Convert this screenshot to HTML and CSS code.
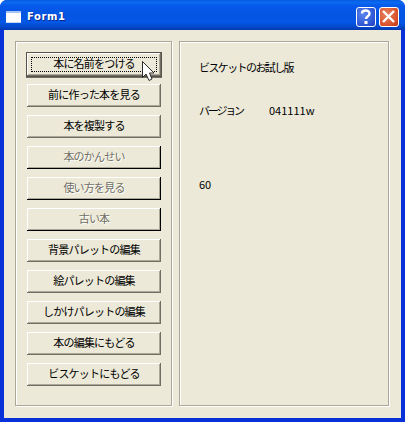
FILE: index.html
```html
<!DOCTYPE html>
<html lang="ja">
<head>
<meta charset="utf-8">
<title>Form1</title>
<link rel="stylesheet" href="styles.css">
</head>
<body>
<div class="window">
  <header class="titlebar">
    <svg class="app-icon" width="15" height="12" viewBox="0 0 15 12"><rect width="15" height="12" fill="#fff"/><rect width="15" height="2" fill="#a9c4f0"/><rect y="11" width="15" height="1" fill="#c8d8f0"/></svg>
    <span class="title">Form1</span>
    <div class="controls">
      <div class="ctl ctl-help">
        <svg width="20" height="20" viewBox="0 0 20 20"><path d="M6 6.500C6 2.500 13.500 2.500 13.500 6.500C13.500 9.500 10 9 10 12" fill="none" stroke="#fff" stroke-width="2.400"/><rect x="8.500" y="14" width="3" height="3" fill="#fff"/></svg>
      </div>
      <div class="ctl ctl-close">
        <svg width="20" height="20" viewBox="0 0 20 20"><path d="M4 4L15 15M15 4L4 15" stroke="#fff" stroke-width="2.400"/></svg>
      </div>
    </div>
  </header>
  <main class="client">
    <section class="group group-left">
      <button class="btn focused"><span class="focus-ring">本に名前をつける</span></button>
      <button class="btn">前に作った本を見る</button>
      <button class="btn">本を複製する</button>
      <button class="btn disabled">本のかんせい</button>
      <button class="btn disabled">使い方を見る</button>
      <button class="btn disabled">古い本</button>
      <button class="btn">背景パレットの編集</button>
      <button class="btn">絵パレットの編集</button>
      <button class="btn">しかけパレットの編集</button>
      <button class="btn">本の編集にもどる</button>
      <button class="btn">ビスケットにもどる</button>
    </section>
    <section class="group group-right">
      <p class="info-title">ビスケットのお試し版</p>
      <p class="info-version"><span class="version-label">バージョン</span><span class="version-value">041111w</span></p>
      <p class="info-count">60</p>
    </section>
  </main>
  <svg class="cursor" width="14" height="22" viewBox="0 0 14 22"><path d="M1.500 1.500V17.500L5 14L8 20.500L11 19L8.500 13H13Z" fill="#fff" stroke="#2b2b2b" stroke-width="1"/></svg>
</div>
</body>
</html>
```
FILE: styles.css
```css
* { box-sizing: border-box; }
html, body { margin: 0; padding: 0; background: #fff; }
body { width: 405px; height: 422px; overflow: hidden; }
.window {
  position: relative;
  width: 405px;
  height: 422px;
  display: flex;
  flex-direction: column;
  border-radius: 7px 7px 0 0;
  background: #0831d9;
  overflow: hidden;
}
.titlebar {
  height: 30px;
  flex: none;
  display: flex;
  align-items: center;
  padding: 3px 6px 0 6px;
  background: linear-gradient(180deg, #0a5ae0 0%, #0a6af0 8%, #0558ea 20%, #0455e2 50%, #0456e6 75%, #0348c8 90%, #0238b0 100%);
}
.app-icon { flex: none; margin-right: 6px; }
.title {
  color: #fff;
  font: bold 10px "DejaVu Sans", sans-serif;
  letter-spacing: 0.6px;
  text-shadow: 1px 1px 0 #0a2a8a;
}
.controls { margin-left: auto; display: flex; gap: 3px; }
.ctl {
  width: 20px;
  height: 20px;
  border: 1px solid #fff;
  border-radius: 3px;
  display: flex;
  align-items: center;
  justify-content: center;
}
.ctl svg { flex: none; }
.ctl-help { background: radial-gradient(circle at 35% 35%, #5a86ee, #2a50d0 75%, #1f3fb0); }
.ctl-close { background: radial-gradient(circle at 35% 35%, #e8825f, #d8502a 70%, #b83414); }
.client {
  flex: none;
  height: 388px;
  margin: 0 4px 4px;
  padding: 11px 12px 12px 11px;
  background: #ece9d8;
  display: flex;
  gap: 7px;
}
.group {
  height: 365px;
  border: 1px solid #aca899;
  box-shadow: 1px 1px 0 #fff, inset 1px 1px 0 #fff;
}
.group-left {
  width: 157px;
  flex: none;
  padding: 11px 0 0 11px;
  display: flex;
  flex-direction: column;
  align-items: flex-start;
  gap: 8px;
}
.group-right {
  flex: 1;
  padding: 18px 0 0 19px;
  font: 11px/14px "Noto Sans CJK JP", sans-serif;
  color: #000;
}
.btn {
  width: 134px;
  height: 23px;
  flex: none;
  padding: 0 0 4px;
  margin: 0;
  background: #ece9d8;
  border: 0;
  border-radius: 0;
  box-shadow: inset -1px -1px 0 #716f64, inset 1px 1px 0 #fff, inset -2px -2px 0 #aca899;
  font: 11px/16px "Noto Sans CJK JP", sans-serif;
  letter-spacing: -0.8px;
  color: #000;
  text-align: center;
  outline: none;
}
.btn.focused {
  padding: 0 0 1px;
  outline: 1px solid #55534a;
  box-shadow: inset -1px -1px 0 #716f64, inset 1px 1px 0 #fff, inset -2px -2px 0 #aca899, 0 1px 0 1px #716f64;
}
.focus-ring {
  display: block;
  margin: 0 4px;
  height: 15px;
  line-height: 11px;
  border: 1px dotted #000;
}
.btn.disabled {
  color: #716f64;
  text-shadow: 1px 1px 0 #fff;
  box-shadow: inset -1px -1px 0 #000, inset 1px 1px 0 #fff, inset -2px -2px 0 #aca899;
}
.info-title, .info-version, .info-count { margin: 0; }
.info-title { height: 14px; letter-spacing: -1.6px; }
.info-version { margin-top: 29px; display: flex; }
.version-label { width: 70px; letter-spacing: -2.200px; }
.info-count { margin-top: 60px; }
.cursor { position: absolute; left: 141px; top: 60px; }
```
